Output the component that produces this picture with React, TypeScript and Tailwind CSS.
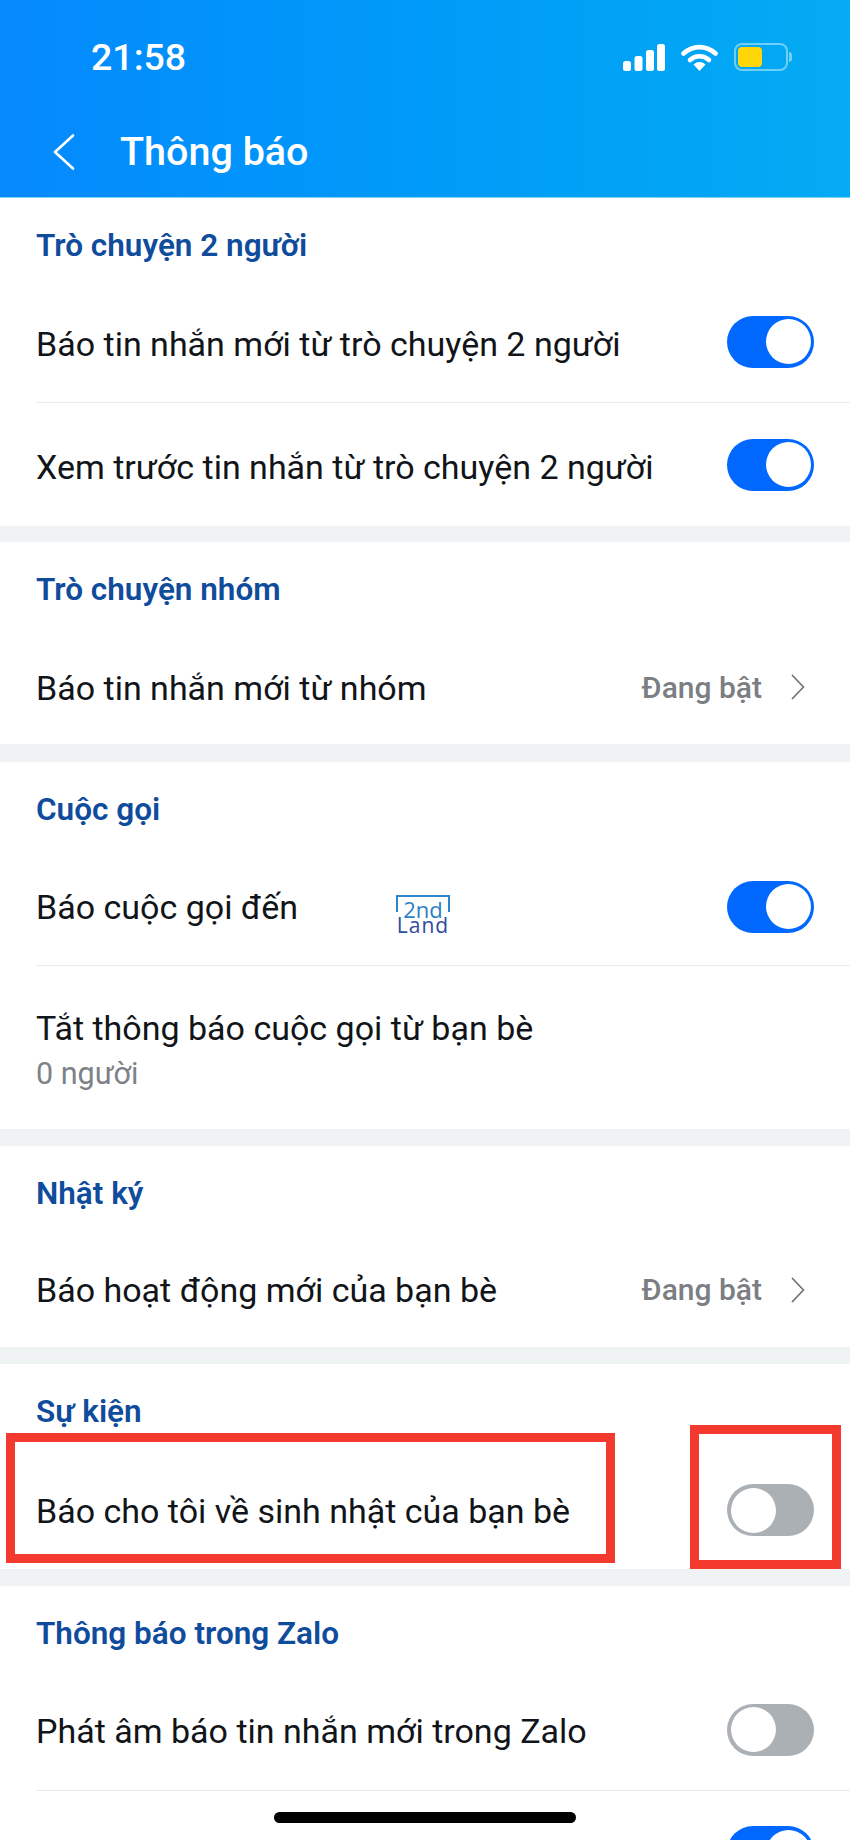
import React from "react";

const LABEL_BASE = "text-[34px] leading-[42px] text-[#111418]";
const LABEL = `${LABEL_BASE} pt-[1px]`;

function Toggle({ on }: { on: boolean }) {
  return (
    <div
      className={`w-[87px] h-[52px] rounded-full p-[3.5px] flex shrink-0 ${
        on ? "bg-[#0068ff] justify-end" : "bg-[#abb0b5] justify-start"
      }`}
    >
      <div className="w-[45px] h-[45px] rounded-full bg-white" />
    </div>
  );
}

function Heading({ children, h }: { children: React.ReactNode; h: string }) {
  return (
    <div className={`px-9 pt-[30px] font-semibold text-[31.5px] leading-[36px] text-[#0f4c9c] ${h}`}>
      {children}
    </div>
  );
}

function Chevron() {
  return (
    <svg width="14" height="26" viewBox="0 0 14 26" fill="none" className="ml-[29px] mr-[9px]">
      <path d="M1.5 1.5L12.5 13L1.5 24.5" stroke="#70757b" strokeWidth="1.8" strokeLinecap="round" strokeLinejoin="round" />
    </svg>
  );
}

function Value() {
  return (
    <div className="flex items-center">
      <span className="text-[30px] font-medium text-[#7b7e83]">Đang bật</span>
      <Chevron />
    </div>
  );
}

function Row({ label, right, divider, h, labelClass = LABEL }: { label: string; right?: React.ReactNode; divider?: boolean; h: string; labelClass?: string }) {
  return (
    <div className={`ml-9 pr-9 flex items-center justify-between ${h} ${divider ? "border-b border-[#e9ebed]" : ""}`}>
      <span className={labelClass}>{label}</span>
      {right}
    </div>
  );
}

function Gap({ h = "h-[17px]" }: { h?: string }) {
  return <div className={`${h} bg-[#f0f3f4]`} />;
}

function StatusIcons() {
  return (
    <div className="flex items-center gap-[16px]">
      <svg width="42" height="27" viewBox="0 0 42 27" fill="white">
        <rect x="0" y="17" width="8" height="10" rx="2.5" />
        <rect x="11.5" y="12" width="8" height="15" rx="2.5" />
        <rect x="23" y="6" width="8" height="21" rx="2.5" />
        <rect x="34" y="0" width="8" height="27" rx="2.5" />
      </svg>
      <svg width="37" height="27" viewBox="0 0 37 27" fill="none">
        <path d="M2.5 9.5C12 1 25 1 34.5 9.5" stroke="white" strokeWidth="4.6" strokeLinecap="round" />
        <path d="M9 16C14.5 11 22.5 11 28 16" stroke="white" strokeWidth="4.6" strokeLinecap="round" />
        <path d="M12.5 20.5C16 17.2 21 17.2 24.5 20.5L18.5 27Z" fill="white" />
      </svg>
      <div className="flex items-center gap-[1px]">
        <div className="w-[54px] h-[28px] rounded-[8px] border-2 border-[#6fd0f7] p-[2px]">
          <div className="w-[24px] h-full rounded-[4px] bg-[#ffd60a]" />
        </div>
        <div className="w-[3px] h-[10px] rounded-r-full bg-[#6fd0f7]" />
      </div>
    </div>
  );
}

function Logo() {
  return (
    <div className="absolute left-[396px] top-[895px] w-[54px] h-[38px] font-['Open_Sans',sans-serif]">
      <div className="absolute left-0 top-0 w-full h-[17px] border-t-2 border-x-2 border-[#2c86c9]" />
      <div className="absolute inset-x-0 top-[7px] text-center text-[22px] leading-[15px] font-medium text-[#2c7fc4]">2nd</div>
      <div className="absolute inset-x-0 top-[23px] text-center text-[21px] leading-[15px] font-medium tracking-[1px] text-[#2f4a9e]">Land</div>
    </div>
  );
}

export default function App() {
  return (
    <div className="relative w-[850px] h-[1840px] overflow-hidden bg-white font-['Roboto','Noto_Sans',sans-serif]">
      {/* Header */}
      <div className="h-[198px] bg-gradient-to-r from-[#0689fd] to-[#05abf3] text-white border-b border-[#7fd0f5]">
        <div className="h-[131px] pl-[91px] pr-[58px] pt-[37px] flex items-start justify-between">
          <span className="text-[37.5px] leading-[40px] font-medium">21:58</span>
          <div className="mt-[6px]">
            <StatusIcons />
          </div>
        </div>
        <div className="flex items-center pl-[53px] h-[42px]">
          <svg width="22" height="36" viewBox="0 0 22 36" fill="none">
            <path d="M20 1.5L2 18l18 16.5" stroke="white" strokeWidth="2.6" strokeLinecap="round" strokeLinejoin="round" />
          </svg>
          <span className="ml-[45px] text-[39.5px] leading-[42px] font-medium">Thông báo</span>
        </div>
      </div>

      {/* Trò chuyện 2 người */}
      <Heading h="h-[83px]">Trò chuyện 2 người</Heading>
      <Row label="Báo tin nhắn mới từ trò chuyện 2 người" right={<Toggle on />} divider h="h-[122px]" labelClass={`${LABEL_BASE} pt-[4px]`} />
      <Row label="Xem trước tin nhắn từ trò chuyện 2 người" right={<Toggle on />} h="h-[123px]" labelClass={`${LABEL_BASE} pt-[4px]`} />
      <Gap h="h-[16px]" />

      {/* Trò chuyện nhóm */}
      <Heading h="h-[88px]">Trò chuyện nhóm</Heading>
      <Row label="Báo tin nhắn mới từ nhóm" right={<Value />} h="h-[114px]" />
      <Gap h="h-[18px]" />

      {/* Cuộc gọi */}
      <Heading h="h-[86px]">Cuộc gọi</Heading>
      <Row label="Báo cuộc gọi đến" right={<Toggle on />} divider h="h-[118px]" />
      <div className="h-[163px] ml-9 pt-[41px]">
        <div className={LABEL_BASE}>Tắt thông báo cuộc gọi từ bạn bè</div>
        <div className="mt-[6px] text-[30.5px] leading-[38px] text-[#7d8288]">0 người</div>
      </div>
      <Gap />

      {/* Nhật ký */}
      <Heading h="h-[86px]">Nhật ký</Heading>
      <Row label="Báo hoạt động mới của bạn bè" right={<Value />} h="h-[115px]" />
      <Gap />

      {/* Sự kiện */}
      <Heading h="h-[87px]">Sự kiện</Heading>
      <Row label="Báo cho tôi về sinh nhật của bạn bè" right={<Toggle on={false} />} h="h-[118px]" />
      <Gap />

      {/* Thông báo trong Zalo */}
      <Heading h="h-[83px]">Thông báo trong Zalo</Heading>
      <Row label="Phát âm báo tin nhắn mới trong Zalo" right={<Toggle on={false} />} divider h="h-[122px]" labelClass={`${LABEL_BASE} pt-[2px]`} />
      <Row
        label="Rung báo tin nhắn mới trong Zalo"
        right={<Toggle on />}
        h="h-[122px]"
        labelClass={`${LABEL_BASE} pt-[10px]`}
      />

      <Logo />

      {/* Red annotation boxes */}
      <div className="absolute left-[6px] top-[1433px] w-[609px] h-[130px] border-[9px] border-[#f4392f]" />
      <div className="absolute left-[690px] top-[1425px] w-[151px] h-[144px] border-[9px] border-[#f4392f]" />

      {/* Home indicator */}
      <div className="absolute left-[274px] top-[1812px] w-[302px] h-[11px] rounded-full bg-black" />
    </div>
  );
}
